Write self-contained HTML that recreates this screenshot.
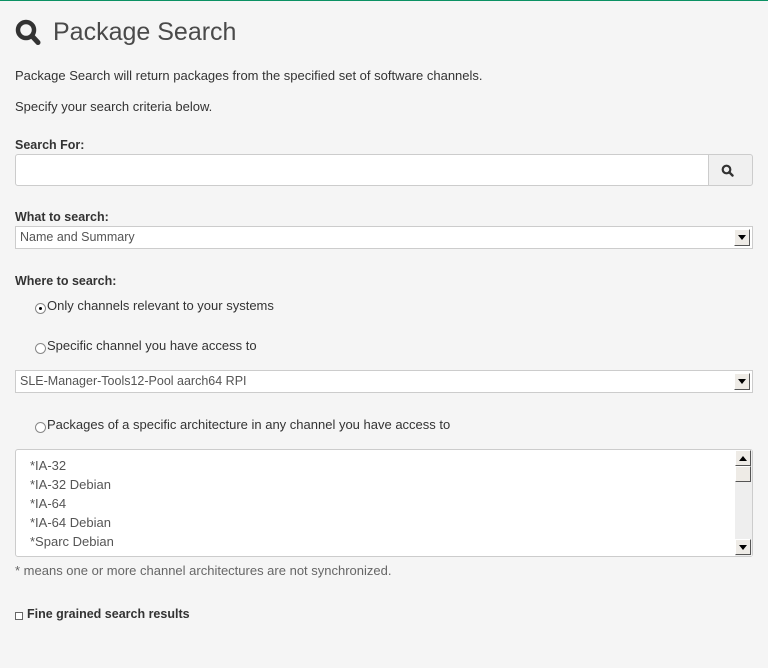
<!DOCTYPE html>
<html><head><meta charset="utf-8"><style>
*{margin:0;padding:0;box-sizing:border-box}
body{width:768px;height:668px;background:#f5f5f5;font-family:"Liberation Sans",sans-serif;font-size:13px;color:#333;position:relative;overflow:hidden;border-top:1px solid #0b9163}
.a{position:absolute;white-space:nowrap}
.b{font-weight:bold;font-size:12.5px}
.sel{position:absolute;left:15px;width:738px;height:23px;background:#fff;border:1px solid #ccc;color:#555;padding:3px 4px;font-size:12.5px}
.arr{position:absolute;right:2px;top:2px;width:16px;height:17px;background:#eeebe6;border:1px solid #888;border-color:#fff #555 #555 #fff}
.arr svg{position:absolute;left:3px;top:5px}
.rad{position:absolute;width:11px;height:11px;border-radius:50%;border:1px solid #888;background:#fff}
</style></head><body>
<svg class="a" style="left:15px;top:18px" width="26" height="27" viewBox="0 0 26 27"><circle cx="11" cy="11" r="8" fill="none" stroke="#333" stroke-width="4.5"/><line x1="17" y1="17" x2="23" y2="23.5" stroke="#333" stroke-width="5" stroke-linecap="round"/></svg>
<div class="a" style="left:53px;top:17px;font-size:25px;color:#4a4a4a">Package Search</div>
<div class="a" style="left:15px;top:67px">Package Search will return packages from the specified set of software channels.</div>
<div class="a" style="left:15px;top:98px">Specify your search criteria below.</div>
<div class="a b" style="left:15px;top:137px">Search For:</div>
<div class="a" style="left:15px;top:153px;width:694px;height:32px;background:#fff;border:1px solid #ccc;border-radius:3px 0 0 3px"></div>
<div class="a" style="left:708px;top:153px;width:45px;height:32px;background:#f0f0f0;border:1px solid #ccc;border-radius:0 3px 3px 0"></div>
<svg class="a" style="left:721px;top:163px" width="13" height="13" viewBox="0 0 13 13"><circle cx="5.5" cy="5.5" r="3.8" fill="none" stroke="#333" stroke-width="2.2"/><line x1="8.2" y1="8.2" x2="11.5" y2="11.5" stroke="#333" stroke-width="2.4" stroke-linecap="round"/></svg>
<div class="a b" style="left:15px;top:209px">What to search:</div>
<div class="sel" style="top:225px">Name and Summary<div class="arr"><svg width="8" height="5"><path d="M0 0h8L4 5z" fill="#000"/></svg></div></div>
<div class="a b" style="left:15px;top:273px">Where to search:</div>
<div class="rad" style="left:35px;top:302px"><div style="position:absolute;left:3px;top:3px;width:3px;height:3px;background:#000;border-radius:50%"></div></div>
<div class="a" style="left:47px;top:297px">Only channels relevant to your systems</div>
<div class="rad" style="left:35px;top:342px"></div>
<div class="a" style="left:47px;top:337px">Specific channel you have access to</div>
<div class="sel" style="top:369px">SLE-Manager-Tools12-Pool aarch64 RPI<div class="arr"><svg width="8" height="5"><path d="M0 0h8L4 5z" fill="#000"/></svg></div></div>
<div class="rad" style="left:35px;top:421px"></div>
<div class="a" style="left:47px;top:416px">Packages of a specific architecture in any channel you have access to</div>
<div class="a" style="left:15px;top:448px;width:738px;height:108px;background:#fff;border:1px solid #ccc;border-radius:3px;color:#555">
<div class="a" style="left:14px;top:6px;line-height:19px">*IA-32<br>*IA-32 Debian<br>*IA-64<br>*IA-64 Debian<br>*Sparc Debian</div>
<div class="a" style="left:719px;top:0;width:17px;height:106px;background:#eeeeee"></div>
<div class="arr" style="top:0;right:1px;height:16px"><svg width="8" height="5" style="top:5px"><path d="M0 5h8L4 0z" fill="#000"/></svg></div>
<div class="arr" style="top:16px;right:1px;height:16px"></div>
<div class="arr" style="top:89px;right:1px;height:16px"><svg width="8" height="5"><path d="M0 0h8L4 5z" fill="#000"/></svg></div>
</div>
<div class="a" style="left:15px;top:562px;color:#666">* means one or more channel architectures are not synchronized.</div>
<div class="a" style="left:15px;top:611px;width:8px;height:8px;border:1px solid #666;background:#fff"></div>
<div class="a b" style="left:27px;top:606px">Fine grained search results</div>
</body></html>
